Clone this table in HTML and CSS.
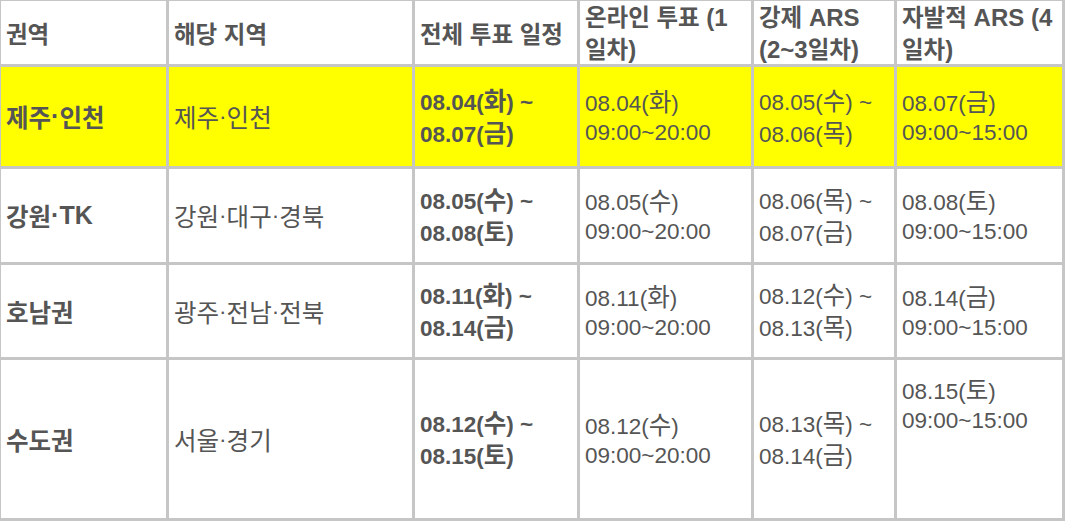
FILE: index.html
```html
<!DOCTYPE html>
<html lang="ko">
<head>
<meta charset="utf-8">
<title>권역별 투표 일정</title>
<link rel="stylesheet" href="styles.css">
</head>
<body>
<div class="schedule" role="table">
  <div class="cell head"><span class="k">권역</span></div>
  <div class="cell head"><span class="k">해당 지역</span></div>
  <div class="cell head"><span class="k">전체 투표 일정</span></div>
  <div class="cell head"><div><span class="k">온라인 투표</span> (1<br><span class="k">일차</span>)</div></div>
  <div class="cell head"><div><span class="k">강제</span> ARS<br>(2~3<span class="k">일차</span>)</div></div>
  <div class="cell head"><div><span class="k">자발적</span> ARS (4<br><span class="k">일차</span>)</div></div>

  <div class="cell hl region"><span class="k">제주</span>·<span class="k">인천</span></div>
  <div class="cell hl"><span class="k">제주</span>·<span class="k">인천</span></div>
  <div class="cell hl strong"><div>08.04(<span class="k">화</span>) ~<br>08.07(<span class="k">금</span>)</div></div>
  <div class="cell hl"><div>08.04(<span class="k">화</span>)<br>09:00~20:00</div></div>
  <div class="cell hl"><div>08.05(<span class="k">수</span>) ~<br>08.06(<span class="k">목</span>)</div></div>
  <div class="cell hl"><div>08.07(<span class="k">금</span>)<br>09:00~15:00</div></div>

  <div class="cell region"><span class="k">강원</span>·TK</div>
  <div class="cell"><span class="k">강원</span>·<span class="k">대구</span>·<span class="k">경북</span></div>
  <div class="cell strong"><div>08.05(<span class="k">수</span>) ~<br>08.08(<span class="k">토</span>)</div></div>
  <div class="cell"><div>08.05(<span class="k">수</span>)<br>09:00~20:00</div></div>
  <div class="cell"><div>08.06(<span class="k">목</span>) ~<br>08.07(<span class="k">금</span>)</div></div>
  <div class="cell"><div>08.08(<span class="k">토</span>)<br>09:00~15:00</div></div>

  <div class="cell region"><span class="k">호남권</span></div>
  <div class="cell"><span class="k">광주</span>·<span class="k">전남</span>·<span class="k">전북</span></div>
  <div class="cell strong"><div>08.11(<span class="k">화</span>) ~<br>08.14(<span class="k">금</span>)</div></div>
  <div class="cell"><div>08.11(<span class="k">화</span>)<br>09:00~20:00</div></div>
  <div class="cell"><div>08.12(<span class="k">수</span>) ~<br>08.13(<span class="k">목</span>)</div></div>
  <div class="cell"><div>08.14(<span class="k">금</span>)<br>09:00~15:00</div></div>

  <div class="cell region"><span class="k">수도권</span></div>
  <div class="cell"><span class="k">서울</span>·<span class="k">경기</span></div>
  <div class="cell strong"><div>08.12(<span class="k">수</span>) ~<br>08.15(<span class="k">토</span>)</div></div>
  <div class="cell"><div>08.12(<span class="k">수</span>)<br>09:00~20:00</div></div>
  <div class="cell"><div>08.13(<span class="k">목</span>) ~<br>08.14(<span class="k">금</span>)</div></div>
  <div class="cell top"><div>08.15(<span class="k">토</span>)<br>09:00~15:00</div></div>
</div>
</body>
</html>
```

FILE: styles.css
```css
html, body {
  margin: 0;
  padding: 0;
  background: #ffffff;
}

.schedule {
  display: grid;
  grid-template-columns: 165px 243px 162px 171px 140px 165px;
  grid-template-rows: 63px 99px 93px 92px 158px;
  gap: 3px;
  padding: 1px 3px 3px 1px;
  width: 1065px;
  box-sizing: border-box;
  background: #c6c6c6;
  font-family: "Liberation Sans", "Noto Sans CJK KR", sans-serif;
  font-size: 22.5px;
  line-height: 29px;
  color: #555555;
}

.k {
  font-family: "Noto Sans CJK KR", sans-serif;
  font-size: 24.5px;
}

.cell {
  background: #ffffff;
  display: flex;
  align-items: center;
  padding: 0 5px;
  white-space: nowrap;
}

.head {
  font-weight: bold;
  font-size: 24px;
  line-height: 30px;
}

.head .k {
  font-size: 23.5px;
}

.region {
  font-weight: bold;
  font-size: 25px;
}

.strong {
  font-weight: bold;
}

.hl {
  background: #ffff00;
}

.top {
  align-items: flex-start;
  padding-top: 14px;
}
```
